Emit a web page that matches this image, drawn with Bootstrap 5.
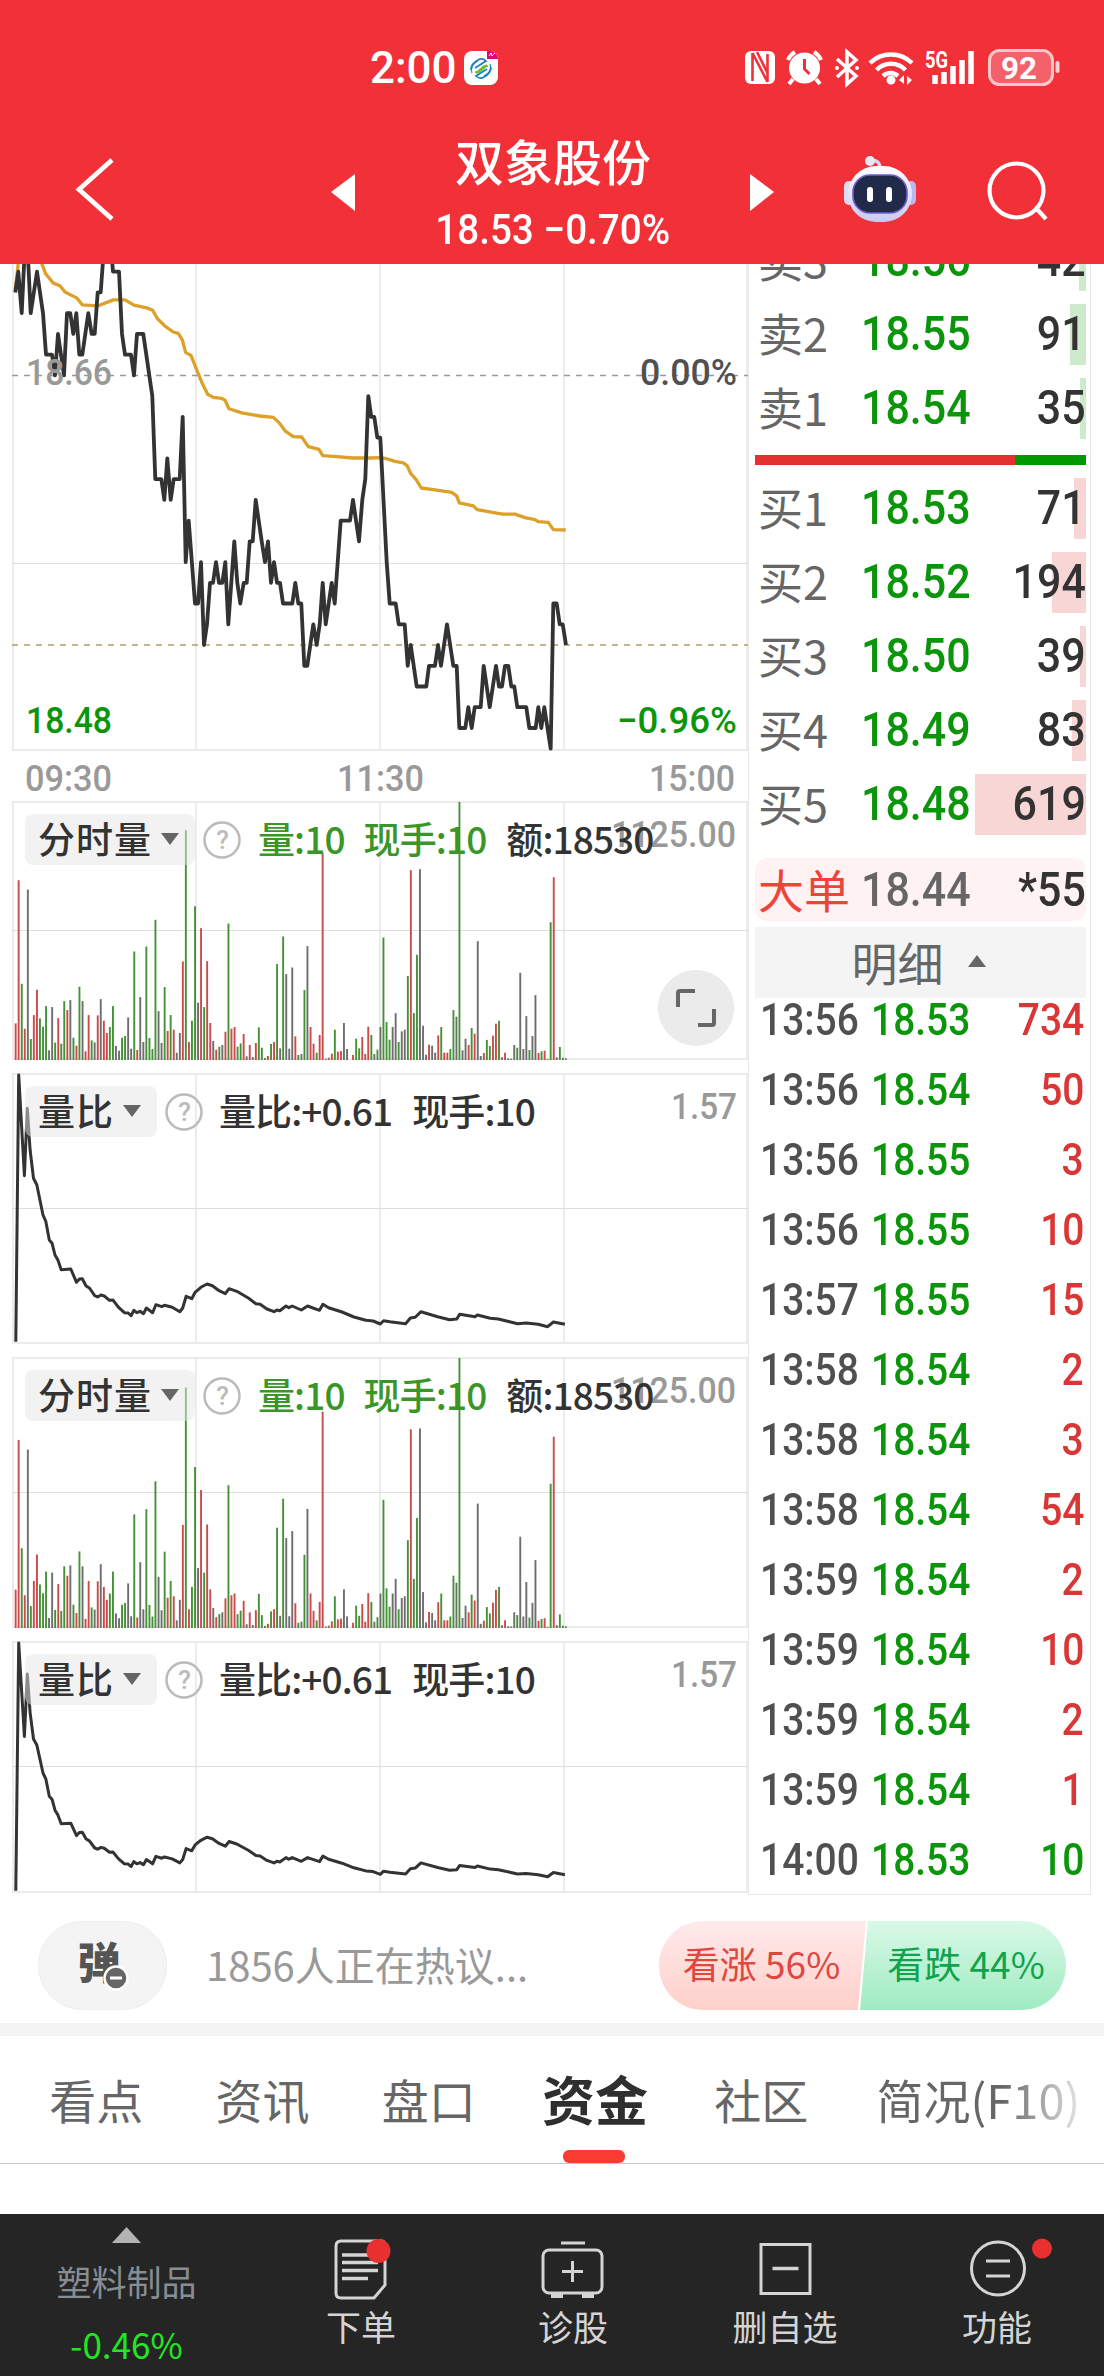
<!DOCTYPE html>
<html lang="zh-CN">
<head>
<meta charset="utf-8">
<meta name="viewport" content="width=device-width, initial-scale=1">
<title>双象股份</title>
<link rel="stylesheet" href="https://cdn.jsdelivr.net/npm/bootstrap@5.3.0/dist/css/bootstrap.min.css">
<style>
body{width:1104px;background:#fff;color:#333;font-family:"Noto Sans CJK SC",sans-serif;overflow-x:hidden;line-height:1}
svg{display:block}
.din{font-family:Roboto,"Noto Sans CJK SC",sans-serif;font-weight:500;display:inline-block;white-space:pre;transform:scaleX(.895);transform-origin:0 50%}
.din-end{transform-origin:100% 50%}
.din-mid{transform-origin:50% 50%;transform:scaleX(.92)}
svg text{font-family:Roboto,sans-serif;font-weight:500}
.up{color:#d93636}.down{color:#0b950b}
.top-bar{height:264px;background:#f13038;color:#fff}
.status-row{height:100px;padding:36px 43px 0 370px}
.clock{font-size:44px;width:94px;transform:none;padding-top:20px}
.title-row{height:164px}
.stock-name{font-size:49px;font-weight:500;line-height:60px}
.stock-quote{font-size:42px;line-height:44px;margin-top:14px}
.main-area{height:1632px}
.left-col{width:748px}
.panel-head{position:absolute;left:25px;top:13px;height:51px;font-size:37px;font-weight:500;letter-spacing:-.9px;white-space:pre}
.panel-head>span{padding-bottom:2px}
.chip{background:rgba(229,229,229,.5);border-radius:8px;height:51px;padding:0 16px 0 13px;letter-spacing:1px}
.caret-d{width:0;height:0;border:9px solid transparent;border-top:12px solid #666;border-bottom:0;margin-left:9px}
.clr-vol{color:#3a9628}
.expand-btn{position:absolute;left:658px;top:169px;width:76px;height:76px;border-radius:50%;background:#ebebeb}
.right-col{width:343px;border:1px solid #e8e8e8;border-top:0;height:1631px;padding:0 4px 0 6px}
.book{margin-top:-41px}
.book-row{height:74px;font-size:45px}
.book-row .lbl{width:106px;color:#666;padding:0 0 3px 3px}
.book-row .px{font-size:48px;width:108px;color:#0b950b}
.book-row .qty{height:61px;font-size:48px;color:#333}
.depth{position:absolute;right:0;top:0;height:61px}
.depth-s{background:#cdeacd}.depth-b{background:#f9d6d6}
.ratio-line{height:10px;margin:10px 0 6px;background:#009a00}
.ratio-buy{background:#e53030}
.big-order{height:63px;margin-top:17px;border-radius:12px;background:#fff2f2;font-size:46px}
.big-order .lbl{width:106px;color:#f0443a;padding:0 0 4px 3px}
.detail-head{height:71px;margin-top:6px;background:#f4f4f4;color:#666;font-size:46px;padding:0 4px 4px 0}
.caret-u{width:0;height:0;border:9px solid transparent;border-bottom:12px solid #666;border-top:0;margin-left:24px}
.trades{height:896px;overflow:hidden}
.trade-list{margin-top:-14px}
.trade-row{height:70px;font-size:43.5px}
.trade-row .tm{width:116px;padding-left:5px;color:#505050}
.trade-row .pr{width:110px}
.trade-row .q{padding-right:2px}
.hot-row{height:127px;padding:25px 38px 13px}
.bullet-pill{width:129px;height:89px;border-radius:44px;background:#f4f4f4;border:1px solid #eee}
.bullet-pill b{font-size:43px;font-weight:900;color:#555;line-height:43px;padding:0 7px 11px 0}
.hot-text{color:#999;font-size:40px;margin-left:39px;padding-bottom:4px}
.vote{width:407px;height:89px}
.vote>div{height:89px;font-size:37px;padding-bottom:4px}
.v-up{width:207px;color:#e0473f;background:linear-gradient(#ffeaea,#ffd0cb);border-radius:44px 0 0 44px;clip-path:polygon(0 0,100% 0,199px 100%,0 100%);padding-right:2px}
.v-dn{width:207px;margin-left:-7px;color:#10a34e;background:linear-gradient(#d9f9e7,#9febc1);border-radius:0 44px 44px 0;clip-path:polygon(9px 0,100% 0,100% 100%,1px 100%);padding-left:7px}
.band{height:13px;background:#f4f4f4}
.tabs{height:128px;border-bottom:1px solid #c8c8c8;padding:0 0 0 13px;font-size:47px;color:#666}
.tab-i{width:166.3px;height:127px;flex:none;padding-bottom:2px;white-space:nowrap}
.tab-on{font-size:53px;font-weight:700;color:#2f2f2f;position:relative}
.tab-on::after{content:"";position:absolute;left:51px;bottom:0;width:62px;height:13px;border-radius:6px;background:#fa3b30}
.fade-txt{background:linear-gradient(90deg,#666 62%,#e4e4e4 100%);-webkit-background-clip:text;background-clip:text;color:transparent;line-height:1.3}
.foot{margin-top:50px;height:162px;background:#252525;color:#d4d4d4;font-size:35px}
.foot-i{width:212px}
.foot-i svg{margin-top:22px}
.foot-i div{margin-top:6px}
.foot-first{width:255px;padding-right:2px;color:#878d93}
</style>
</head>
<body>
<header class="top-bar">
  <div class="status-row d-flex align-items-start justify-content-between">
    <div class="d-flex align-items-start">
      <span class="clock din" style="padding-top:10px">2:00</span>
      <svg style="margin-top:15px" width="34" height="34" viewBox="0 0 34 34"><rect width="34" height="34" rx="8" fill="#fff"/><path d="M23 0h3a8 8 0 0 1 8 8H23z" fill="#e6007e"/><path d="M25 5l2-3 1 3 3-3" fill="none" stroke="#fff" stroke-width="1"/><g fill="none" stroke-width="1.700"><path d="M7 19c0-5 3-8 7-10 3-2 6-1 8 1l-11 7" stroke="#1384c8"/><path d="M27 16c0 5-3 8-7 10-3 2-6 1-8-1l11-7" stroke="#1384c8"/><path d="M8 22c-2-5 1-10 6-12M26 13c2 5-1 10-6 12" stroke="#1384c8" stroke-width="1.200"/><path d="M11 21c5 1 5-6 12-7M12 22c6 0 6-6 12-7" stroke="#79b928"/></g></svg>
    </div>
    <svg class="mt-2" width="318" height="44" viewBox="743 44 318 44">
      <rect x="745" y="51" width="30" height="33" rx="6" fill="#fff"/><path d="M752.500 53v28M767.500 54v28M752.500 53l15 29M757 52l10.500 21" fill="none" stroke="#f13038" stroke-width="2.600"/>
      <g fill="#fff"><circle cx="804.500" cy="68" r="15.500"/><path d="M793 79l-4 5M816 79l4 5M788 60q2-5 7-8M821 60q-2-5-7-8" fill="none" stroke="#fff" stroke-width="4"/></g><path d="M804.500 59v10l5 5" stroke="#f13038" stroke-width="3" fill="none"/>
      <path d="M837 59l19 17-9 8V52l9 8-19 17" fill="none" stroke="#fff" stroke-width="3.500"/><circle cx="837" cy="68" r="2" fill="#fff"/><circle cx="857" cy="68" r="2" fill="#fff"/>
      <g fill="none" stroke="#fff" stroke-width="4.500"><path d="M870 63a30 30 0 0 1 42 0M876.500 70a20 20 0 0 1 29 0M883 76a11 11 0 0 1 15 0"/></g><circle cx="891" cy="80" r="4.500" fill="#fff"/><path d="M899 80l5-5v9zM912 80l-5 5v-9z" fill="#fff"/>
      <text x="925" y="68" font-size="23" fill="#fff" textLength="23" lengthAdjust="spacingAndGlyphs" style="font-weight:700">5G</text>
      <path d="M935 84v-9M944 84V72M953 84V66M962 84V60M971 84V51" stroke="#fff" stroke-width="5.500"/>
      <rect x="989.500" y="50.500" width="63" height="34" rx="10" fill="#f5616a" stroke="#fbc7ca" stroke-width="3"/><rect x="1055.500" y="61" width="4" height="12" rx="2" fill="#fbd0d2"/>
      <text x="1001" y="79" font-size="32" fill="#fff" textLength="36" lengthAdjust="spacingAndGlyphs" style="font-weight:700">92</text>
    </svg>
  </div>
  <div class="title-row d-flex">
    <svg width="400" height="164" viewBox="0 100 400 164"><path d="M112 160L79 189.500l33 29.500" fill="none" stroke="#fff" stroke-width="4.800"/><path d="M331 192l24-18v37z" fill="#fff"/></svg>
    <div class="text-center" style="width:306px;padding-top:30px">
      <div class="stock-name">双象股份</div>
      <div class="stock-quote"><span class="din din-mid">18.53 −0.70%</span></div>
    </div>
    <svg width="398" height="164" viewBox="706 100 398 164">
      <defs><linearGradient id="hd" x1="0" y1="0" x2="0" y2="1"><stop offset="0" stop-color="#fff"/><stop offset="1" stop-color="#c9c8f1"/></linearGradient></defs>
      <path d="M774 192l-24-18v37z" fill="#fff"/>
      <path d="M870 161c7-2 10 2 10 8" fill="none" stroke="#d9d8ee" stroke-width="3.500"/><circle cx="870" cy="161" r="5" fill="#e9e8f7"/>
      <rect x="844" y="181" width="10" height="24" rx="5" fill="#dcdcf2"/><rect x="906" y="181" width="10" height="24" rx="5" fill="#b9b8ea"/>
      <rect x="848" y="166" width="64" height="56" rx="28" fill="url(#hd)"/>
      <rect x="853" y="175" width="54" height="38" rx="17" fill="#222a4a" stroke="#6d5fd0" stroke-width="1.600"/>
      <rect x="867" y="187" width="6" height="15" rx="3" fill="#fff"/><rect x="886" y="187" width="6" height="15" rx="3" fill="#fff"/>
      <circle cx="1016.500" y="190.500" cy="190.500" r="27" fill="none" stroke="#fff" stroke-width="4.200"/><path d="M1036 208l10 11" stroke="#fff" stroke-width="4.200"/>
    </svg>
  </div>
</header>

<main class="main-area d-flex">
  <section class="left-col">
    <svg width="748" height="537" viewBox="0 264 748 537">
      <g stroke="#ebebeb" stroke-width="1.800"><path d="M13 264V750M196 264V750M380 264V750M564 264V750M747 264V750M12 750H748"/><path d="M12 563.500H748" stroke="#dedede" stroke-width="1.200"/></g>
      <path d="M12 375.500H748" stroke="#999" stroke-width="1.500" stroke-dasharray="6 6"/>
      <path d="M12 645H748" stroke="#b09a6c" stroke-width="1.700" stroke-dasharray="6 6"/>
      <polyline id="avgLine" fill="none" stroke="#dda028" stroke-width="3.300" stroke-linejoin="round"/>
      <polyline id="priceLine" fill="none" stroke="#333" stroke-width="3.800" stroke-linejoin="round"/>
      <g font-size="36.500">
        <text x="26" y="385" fill="#999" textLength="86" lengthAdjust="spacingAndGlyphs">18.66</text>
        <text x="26" y="733" fill="#0b950b" textLength="86" lengthAdjust="spacingAndGlyphs">18.48</text>
        <text x="640" y="385" fill="#505050" textLength="97" lengthAdjust="spacingAndGlyphs">0.00%</text>
        <text x="617" y="733" fill="#0b950b" textLength="120" lengthAdjust="spacingAndGlyphs">−0.96%</text>
        <g fill="#999"><text x="25" y="790.500" textLength="87" lengthAdjust="spacingAndGlyphs">09:30</text><text x="337" y="790.500" textLength="87" lengthAdjust="spacingAndGlyphs">11:30</text><text x="649" y="790.500" textLength="86" lengthAdjust="spacingAndGlyphs">15:00</text></g>
      </g>
    </svg>
    <div class="position-relative">
      <svg class="vol" data-h="258" width="748" height="272"></svg>
      <div class="panel-head d-flex align-items-center"><span class="chip d-flex align-items-center">分时量<i class="caret-d"></i></span><svg style="margin-left:8px" width="38" height="38"><circle cx="19" cy="19" r="17.500" fill="none" stroke="#bbb" stroke-width="2.500"/><text x="19" y="28" text-anchor="middle" font-size="26" fill="#bbb">?</text></svg><span class="clr-vol" style="margin-left:17px">量:10</span><span class="clr-vol" style="margin-left:19px">现手:10</span><span style="margin-left:20px">额:18530</span></div>
      <div class="expand-btn"><svg width="76" height="76" fill="none" stroke="#666" stroke-width="4"><path d="M37 21H22q-2 0-2 2V37M40 55H54q2 0 2-2V39"/></svg></div>
    </div>
    <div class="position-relative">
      <svg class="rat" data-h="269" width="748" height="284"></svg>
      <div class="panel-head d-flex align-items-center"><span class="chip d-flex align-items-center">量比<i class="caret-d"></i></span><svg style="margin-left:8px" width="38" height="38"><circle cx="19" cy="19" r="17.500" fill="none" stroke="#bbb" stroke-width="2.500"/><text x="19" y="28" text-anchor="middle" font-size="26" fill="#bbb">?</text></svg><span style="margin-left:16px">量比:+0.61</span><span style="margin-left:20px">现手:10</span></div>
    </div>
    <div class="position-relative">
      <svg class="vol" data-h="270" width="748" height="284"></svg>
      <div class="panel-head d-flex align-items-center"><span class="chip d-flex align-items-center">分时量<i class="caret-d"></i></span><svg style="margin-left:8px" width="38" height="38"><circle cx="19" cy="19" r="17.500" fill="none" stroke="#bbb" stroke-width="2.500"/><text x="19" y="28" text-anchor="middle" font-size="26" fill="#bbb">?</text></svg><span class="clr-vol" style="margin-left:17px">量:10</span><span class="clr-vol" style="margin-left:19px">现手:10</span><span style="margin-left:20px">额:18530</span></div>
    </div>
    <div class="position-relative">
      <svg class="rat" data-h="250" width="748" height="255"></svg>
      <div class="panel-head d-flex align-items-center"><span class="chip d-flex align-items-center">量比<i class="caret-d"></i></span><svg style="margin-left:8px" width="38" height="38"><circle cx="19" cy="19" r="17.500" fill="none" stroke="#bbb" stroke-width="2.500"/><text x="19" y="28" text-anchor="middle" font-size="26" fill="#bbb">?</text></svg><span style="margin-left:16px">量比:+0.61</span><span style="margin-left:20px">现手:10</span></div>
    </div>
  </section>
  <aside class="right-col overflow-hidden">
    <div class="book" id="sells"></div>
    <div class="ratio-line"><div class="ratio-buy h-100" style="width:78.4%"></div></div>
    <div id="buys"></div>
    <div class="big-order d-flex align-items-center"><span class="lbl">大单</span><span class="din" style="font-size:48px;color:#666">18.44</span><span class="din din-end ms-auto" style="font-size:48px">*55</span></div>
    <div class="detail-head d-flex align-items-center justify-content-center">明细<i class="caret-u"></i></div>
    <div class="trades"><div class="trade-list" id="trades"></div></div>
  </aside>
</main>

<section class="hot-row d-flex align-items-center">
  <div class="bullet-pill d-flex align-items-center justify-content-center position-relative"><b>弹</b><svg class="position-absolute" style="left:64px;top:43px" width="26" height="26"><circle cx="13" cy="13" r="11.500" fill="#666" stroke="#fff" stroke-width="2.500"/><path d="M7 13h12" stroke="#fff" stroke-width="3"/></svg></div>
  <div class="hot-text">1856人正在热议...</div>
  <div class="vote d-flex ms-auto"><div class="v-up d-flex align-items-center justify-content-center">看涨 56%</div><div class="v-dn d-flex align-items-center justify-content-center">看跌 44%</div></div>
</section>
<div class="band"></div>
<nav class="tabs d-flex overflow-hidden">
  <div class="tab-i d-flex align-items-center justify-content-center">看点</div>
  <div class="tab-i d-flex align-items-center justify-content-center">资讯</div>
  <div class="tab-i d-flex align-items-center justify-content-center">盘口</div>
  <div class="tab-i tab-on d-flex align-items-center justify-content-center">资金</div>
  <div class="tab-i d-flex align-items-center justify-content-center">社区</div>
  <div class="tab-i d-flex align-items-center ps-4 ms-2 w-auto"><span class="fade-txt">简况(F10)</span></div>
</nav>
<footer class="foot d-flex">
  <div class="foot-first d-flex flex-column align-items-center">
    <svg style="margin-top:13px" width="29" height="16"><path d="M0 16L14.500 0 29 16z" fill="#b3b3b3"/></svg>
    <div style="margin-top:20px">塑料制品</div>
    <div style="margin-top:28px;color:#22e622">-0.46%</div>
  </div>
  <div class="foot-i d-flex flex-column align-items-center">
    <svg width="60" height="66" fill="none" stroke="#d4d4d4" stroke-width="3"><path d="M10 5h40q4 0 4 4v40l-11 13H10q-5 0-5-5V10q0-5 5-5z"/><path d="M11 19h26M11 26.500h36M11 34.500h36M11 42.500h26" stroke-width="3.500"/><circle cx="47.500" cy="15" r="12" fill="#e83030" stroke="none"/></svg>
    <div>下单</div>
  </div>
  <div class="foot-i d-flex flex-column align-items-center">
    <svg width="64" height="66" fill="none" stroke="#d4d4d4" stroke-width="3"><rect x="2" y="14" width="59" height="43" rx="6"/><path d="M20 7h24M31.500 25v21M21 35.500h21"/><path d="M10 60h12M41 60h12" stroke-width="4"/></svg>
    <div>诊股</div>
  </div>
  <div class="foot-i d-flex flex-column align-items-center">
    <svg width="60" height="66" fill="none" stroke="#d4d4d4" stroke-width="3"><rect x="6" y="8.500" width="49" height="49"/><path d="M17.500 32.500h26" stroke-width="3.500"/></svg>
    <div>删自选</div>
  </div>
  <div class="foot-i d-flex flex-column align-items-center">
    <svg width="120" height="66" fill="none" stroke="#d4d4d4" stroke-width="3"><circle cx="61" cy="32.500" r="26.500"/><path d="M49 25h24M49 40h24"/><circle cx="105" cy="12.500" r="10" fill="#e83030" stroke="none"/></svg>
    <div>功能</div>
  </div>
</footer>

<script>
// price series: x in thirds of a pixel, then cents below the 18.66 close
const price=[46,-4,55,-5,65,-3,74,-6,83,-6,92,-3,111,-5,129,-3,138,-1,156,-1,165,0,174,-2,192,0,201,-3,211,-3,220,-2,229,-3,238,-1,247,-1,265,-3,275,-2,284,-2,293,-4,302,-4,311,-6,334,-6,339,-5,357,-5,366,-2,375,-1,393,-1,402,0,411,-2,430,-2,448,0,457,1,466,5,484,5,493,6,502,4,512,6,521,5,539,5,548,2,557,9,566,7,585,11,594,11,603,9,612,13,621,12,630,10,639,10,648,9,657,10,667,10,676,9,685,12,703,8,712,10,721,11,731,10,740,10,749,8,758,8,767,6,785,8,795,9,804,8,813,10,822,9,831,10,840,10,849,11,877,11,886,10,895,11,904,11,913,14,922,14,940,12,950,13,959,12,968,10,977,12,995,10,1004,11,1022,7,1050,7,1059,6,1077,8,1087,6,1096,5,1105,1,1114,2,1123,2,1132,3,1141,3,1160,9,1169,11,1187,11,1196,12,1214,12,1223,14,1232,13,1250,15,1279,15,1287,14,1305,14,1314,13,1323,14,1341,12,1360,14,1370,14,1378,17,1396,17,1405,16,1415,17,1424,16,1442,16,1451,14,1469,16,1488,14,1497,15,1506,15,1515,14,1525,14,1534,15,1543,15,1552,16,1579,16,1588,17,1607,17,1615,16,1624,17,1633,16,1652,18,1660,11,1670,11,1679,12,1688,12,1698,13];
const avg=[46,85,50,50,57,-10,120,-5,125,10,137,40,160,67,180,75,195,93,230,110,247,130,295,133,340,116,375,116,402,131,440,139,458,146,472,170,495,192,520,209,535,213,547,232,557,269,573,277,590,319,605,355,623,390,640,399,665,402,675,407,687,432,725,444,780,453,820,457,838,473,855,496,880,513,905,514,925,542,957,550,968,568,1000,570,1060,575,1110,575,1140,574,1160,577,1185,585,1210,589,1222,598,1232,620,1248,637,1264,662,1300,667,1355,675,1370,685,1378,705,1420,714,1432,725,1490,735,1510,738,1545,738,1575,748,1605,754,1615,760,1645,762,1660,783,1697,784];
const pairs=(a,f)=>{let s='';for(let i=0;i<a.length;i+=2)s+=f(a[i],a[i+1])+' ';return s};
priceLine.setAttribute('points',pairs(price,(x,n)=>(x/3).toFixed(1)+','+(375.4+n*20.74).toFixed(1)));
avgLine.setAttribute('points',pairs(avg,(x,y)=>(x/3).toFixed(1)+','+(260+y/2.904).toFixed(1)));

// minute volumes: colour letter and bar top, 808 is zero
const vol="r698 r268 g579 r714 k296 g745 r673 r597 g683 g708 g646 k779 k649 g756 r682 g759 g631 r658 k628 g741 r765 g588 k631 r782 r673 g749 k755 r674 k625 r690 r727 g709 g646 k766 k780 g741 g736 k680 k774 g482 r778 k619 k754 g467 g742 g775 g387 k661 k757 g589 r721 g673 r717 k786 k727 r512 g118 r754 g690 g346 k636 r412 g649 r511 r697 k751 r777 g768 k763 r723 g398 r714 r709 g768 g758 r730 k797 r763 k799 r757 g710 g771 g802 r796 g760 r754 g520 k773 g437 k550 k774 k530 r737 g793 k790 g598 k466 r709 r759 g786 r733 r187 g804 r801 r789 g717 r783 r781 k697 k775 k808 r793 g744 g773 r739 r790 r708 g733 k790 g777 k709 g440 g694 g747 k709 k667 g754 k722 k717 g556 r238 g667 g492 k235 k705 k792 r762 k765 k786 r734 g709 r786 r786 g775 g658 k678 g33 k779 k744 r763 g712 r729 k451 k796 r787 g748 g766 r735 r699 g690 k800 r786 k803 g804 k763 g771 k546 k775 k676 g778 k736 k613 r787 g782 r780 g805 g394 r259 k800 g769 k801 g803".split(' ');
const clr={r:'#cc4a4a',g:'#449236',k:'#6e6e6e'};
function grid(h,mid){return `<g stroke="#ebebeb" stroke-width="1.800" fill="none"><path d="M12 1H748M12 ${h}H748M13 0V${h}M196 0V${h}M380 0V${h}M564 0V${h}M747 0V${h}"/><path d="M12 ${mid}H748" stroke="#dedede" stroke-width="1.200"/></g>`}
document.querySelectorAll('svg.vol').forEach(s=>{
  const h=+s.dataset.h;let o=grid(h,Math.round(h/2)+.5);
  vol.forEach((v,i)=>{const t=(808-v.slice(1))/775*h;if(t>0)o+=`<rect x="${(14.7+i*3.04).toFixed(1)}" y="${(h+1-t).toFixed(1)}" width="1.900" height="${t.toFixed(1)}" fill="${clr[v[0]]}"/>`});
  o+='<text x="611" y="46" font-size="36.500" fill="#999" textLength="125" lengthAdjust="spacingAndGlyphs">1125.00</text>';
  s.innerHTML=o;
});
// volume ratio curve
const rat=[33,845,39,45,51,347,57,145,63,270,70,355,77,374,90,465,96,485,103,540,109,550,115,585,121,600,128,629,148,627,160,667,166,657,172,656,180,678,187,684,198,707,204,711,211,705,218,708,229,721,236,720,248,742,260,758,268,759,274,767,280,751,286,758,293,754,300,761,306,744,319,758,326,734,338,740,344,736,360,742,376,755,382,744,389,709,401,716,408,697,420,682,433,672,444,677,458,692,471,701,479,686,495,694,520,715,535,731,544,733,558,747,573,755,579,750,585,752,598,738,604,743,611,738,630,750,643,738,668,751,675,733,687,743,715,756,740,771,765,781,780,783,795,792,802,782,815,785,848,791,858,774,868,772,880,755,915,770,940,779,955,777,961,763,993,770,998,765,1025,775,1042,777,1082,791,1100,789,1125,793,1145,800,1157,786,1181,793];
document.querySelectorAll('svg.rat').forEach(s=>{
  const h=+s.dataset.h;
  s.innerHTML=grid(h+1,Math.round(h/2)+.5)+`<polyline fill="none" stroke="#333" stroke-width="3" stroke-linejoin="round" points="${pairs(rat,(x,y)=>(x/2.0907).toFixed(1)+','+(1+(y-42)/807*h).toFixed(1))}"/><text x="671" y="46" font-size="36.500" fill="#999" textLength="66" lengthAdjust="spacingAndGlyphs">1.57</text>`;
});

const bookRow=(k,[n,p,q,w])=>`<div class="book-row d-flex align-items-center"><span class="lbl">${n}</span><span class="px din">${p}</span><div class="qty flex-fill position-relative d-flex align-items-center justify-content-end"><div class="depth depth-${k}" style="width:${w}px"></div><span class="din din-end position-relative">${q}</span></div></div>`;
sells.innerHTML=[['卖3','18.56','42',7],['卖2','18.55','91',16],['卖1','18.54','35',6]].map(r=>bookRow('s',r)).join('');
buys.innerHTML=[['买1','18.53','71',12],['买2','18.52','194',34],['买3','18.50','39',6],['买4','18.49','83',14],['买5','18.48','619',111]].map(r=>bookRow('b',r)).join('');
trades.innerHTML=[['13:56','18.53',734],['13:56','18.54',50],['13:56','18.55',3],['13:56','18.55',10],['13:57','18.55',15],['13:58','18.54',2],['13:58','18.54',3],['13:58','18.54',54],['13:59','18.54',2],['13:59','18.54',10],['13:59','18.54',2],['13:59','18.54',1],['14:00','18.53',10]].map((r,i)=>`<div class="trade-row d-flex align-items-center"><span class="tm"><span class="din">${r[0]}</span></span><span class="pr down"><span class="din">${r[1]}</span></span><span class="ms-auto q ${i==12?'down':'up'}"><span class="din din-end">${r[2]}</span></span></div>`).join('');
</script>
<script src="https://cdn.jsdelivr.net/npm/bootstrap@5.3.0/dist/js/bootstrap.bundle.min.js"></script>
</body>
</html>
